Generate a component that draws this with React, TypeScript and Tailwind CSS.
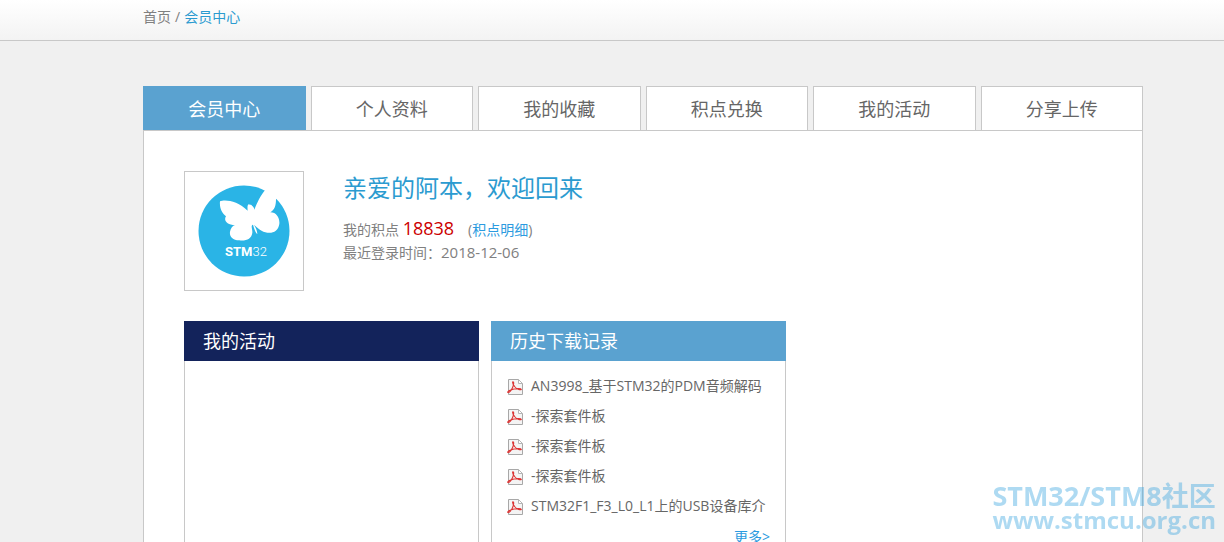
import clsx from 'clsx';

const TABS = ['会员中心', '个人资料', '我的收藏', '积点兑换', '我的活动', '分享上传'];

const DOWNLOADS = [
  { id: 1, title: 'AN3998_基于STM32的PDM音频解码' },
  { id: 2, title: '-探索套件板' },
  { id: 3, title: '-探索套件板' },
  { id: 4, title: '-探索套件板' },
  { id: 5, title: 'STM32F1_F3_L0_L1上的USB设备库介' },
];

function PdfIcon() {
  return (
    <svg viewBox="0 0 16 16" className="mt-px h-4 w-4 shrink-0" aria-hidden="true">
      <path d="M1.5.5h10l4 4v11h-14z" fill="#f4f4f4" stroke="#a8a8a8" />
      <path d="M11.500.5v4h4z" fill="#fff" stroke="#b5b5b5" />
      <path
        d="M5.800 2.800C7.300 2.600 6.600 6 5.600 8.500C4.600 11 2.300 14 .8 13.400C0 12.400 4 10.700 7 10C10 9.300 14 9.500 14.300 10.400C13.600 11.400 10 10.400 8 8C6.400 6 5.300 3.400 5.800 2.800Z"
        fill="none"
        stroke="#dc3433"
        strokeWidth="1.1"
      />
    </svg>
  );
}

function Avatar() {
  return (
    <svg viewBox="0 0 118 118" className="h-full w-full" role="img" aria-label="STM32">
      <circle cx="59" cy="59" r="45.500" fill="#2ab4e6" />
      <g transform="translate(27 8) scale(.3333)" fill="#fff">
        <path d="M24 64C38 57 78 62 107 92C106 82 106 75 110 73C114 76 118 72 120 77C124 80 127 84 127 89C136 68 145 46 162 28L178 -6L214 36L192 58C192 76 188 90 175 97C194 97 204 115 202 132C199 153 182 161 166 158C150 156 136 144 126 134C131 143 136 152 136 163C129 156 126 144 123 134C115 136 122 148 121 158C119 176 102 184 82 181C60 180 52 168 54 155C56 144 62 137 69 135C45 135 34 121 42 109C29 100 22 82 24 64Z" />
      </g>
      <text x="40" y="84" fill="#fff" fontSize="13" fontFamily="Roboto, 'Liberation Sans', sans-serif">
        <tspan fontWeight="700">STM</tspan>
        <tspan fontWeight="300">32</tspan>
      </text>
    </svg>
  );
}

function Card({ title, headerClass, children }: { title: string; headerClass: string; children?: React.ReactNode }) {
  return (
    <section className="flex w-[295px] flex-col">
      <h2 className={clsx('h-10 pl-[19px] text-lg leading-10 text-white', headerClass)}>{title}</h2>
      <div className="min-h-60 flex-1 border-x border-b border-[#c8c8c8] px-[15px] pt-[10px]">{children}</div>
    </section>
  );
}

export default function App() {
  return (
    <div className="min-h-screen bg-[#f0f0f0] font-['Open_Sans','Noto_Sans_CJK_SC',sans-serif] text-sm text-[#666]">
      <header className="border-b border-[#c8c8c8] bg-linear-to-b from-white to-[#f3f3f3] pl-[143px]">
        <nav className="flex h-10 gap-1 leading-[34px] text-[#808080]">
          <a href="#home">首页</a>
          <span>/</span>
          <a href="#member" className="text-[#2b9bd0]">会员中心</a>
        </nav>
      </header>

      <main className="pt-[45px] pr-[81px] pl-[143px]">
        <nav className="grid grid-cols-6 gap-[5px]">
          {TABS.map((tab, index) => (
            <a
              key={tab}
              href={`#tab-${index}`}
              className={clsx(
                'h-11 border border-b-0 text-center text-lg leading-[44px]',
                index === 0 ? 'border-[#5aa2d0] bg-[#5aa2d0] text-white' : 'border-[#c8c8c8] bg-white'
              )}
            >
              {tab}
            </a>
          ))}
        </nav>

        <div className="border border-[#c8c8c8] bg-white px-10 py-10">
          <div className="flex">
            <div className="h-[120px] w-[120px] border border-[#c8c8c8]">
              <Avatar />
            </div>
            <div className="pl-[39px]">
              <h1 className="text-2xl leading-[34px] text-[#2b9bd0]">亲爱的阿本，欢迎回来</h1>
              <p className="mt-[11px] leading-6 text-[#808080]">
                我的积点 <span className="text-lg leading-6 text-[#c00]">18838</span>
                <span className="ml-[14px]">
                  (<a href="#points" className="text-[#2b9be0]">积点明细</a>)
                </span>
              </p>
              <p className="leading-5 text-[#808080]">
                最近登录时间：<time className="text-[15px]">2018-12-06</time>
              </p>
            </div>
          </div>

          <div className="mt-[30px] flex gap-3">
            <Card title="我的活动" headerClass="bg-[#13235b]" />
            <Card title="历史下载记录" headerClass="bg-[#5aa2d0]">
              <ul>
                {DOWNLOADS.map((item) => (
                  <li key={item.id}>
                    <a href={`#file-${item.id}`} className="flex h-[30px] items-center gap-2 whitespace-nowrap">
                      <PdfIcon />
                      {item.title}
                    </a>
                  </li>
                ))}
              </ul>
              <div className="text-right leading-8">
                <a href="#more" className="text-[#2b9be0]">更多&gt;</a>
              </div>
            </Card>
          </div>
        </div>
      </main>

      <div className="pointer-events-none fixed right-2 bottom-[10px] leading-6 font-bold text-[#2b9fdc]/38">
        <p className="text-[27px] leading-6">STM32/STM8社区</p>
        <p className="text-2xl leading-6">www.stmcu.org.cn</p>
      </div>
    </div>
  );
}
